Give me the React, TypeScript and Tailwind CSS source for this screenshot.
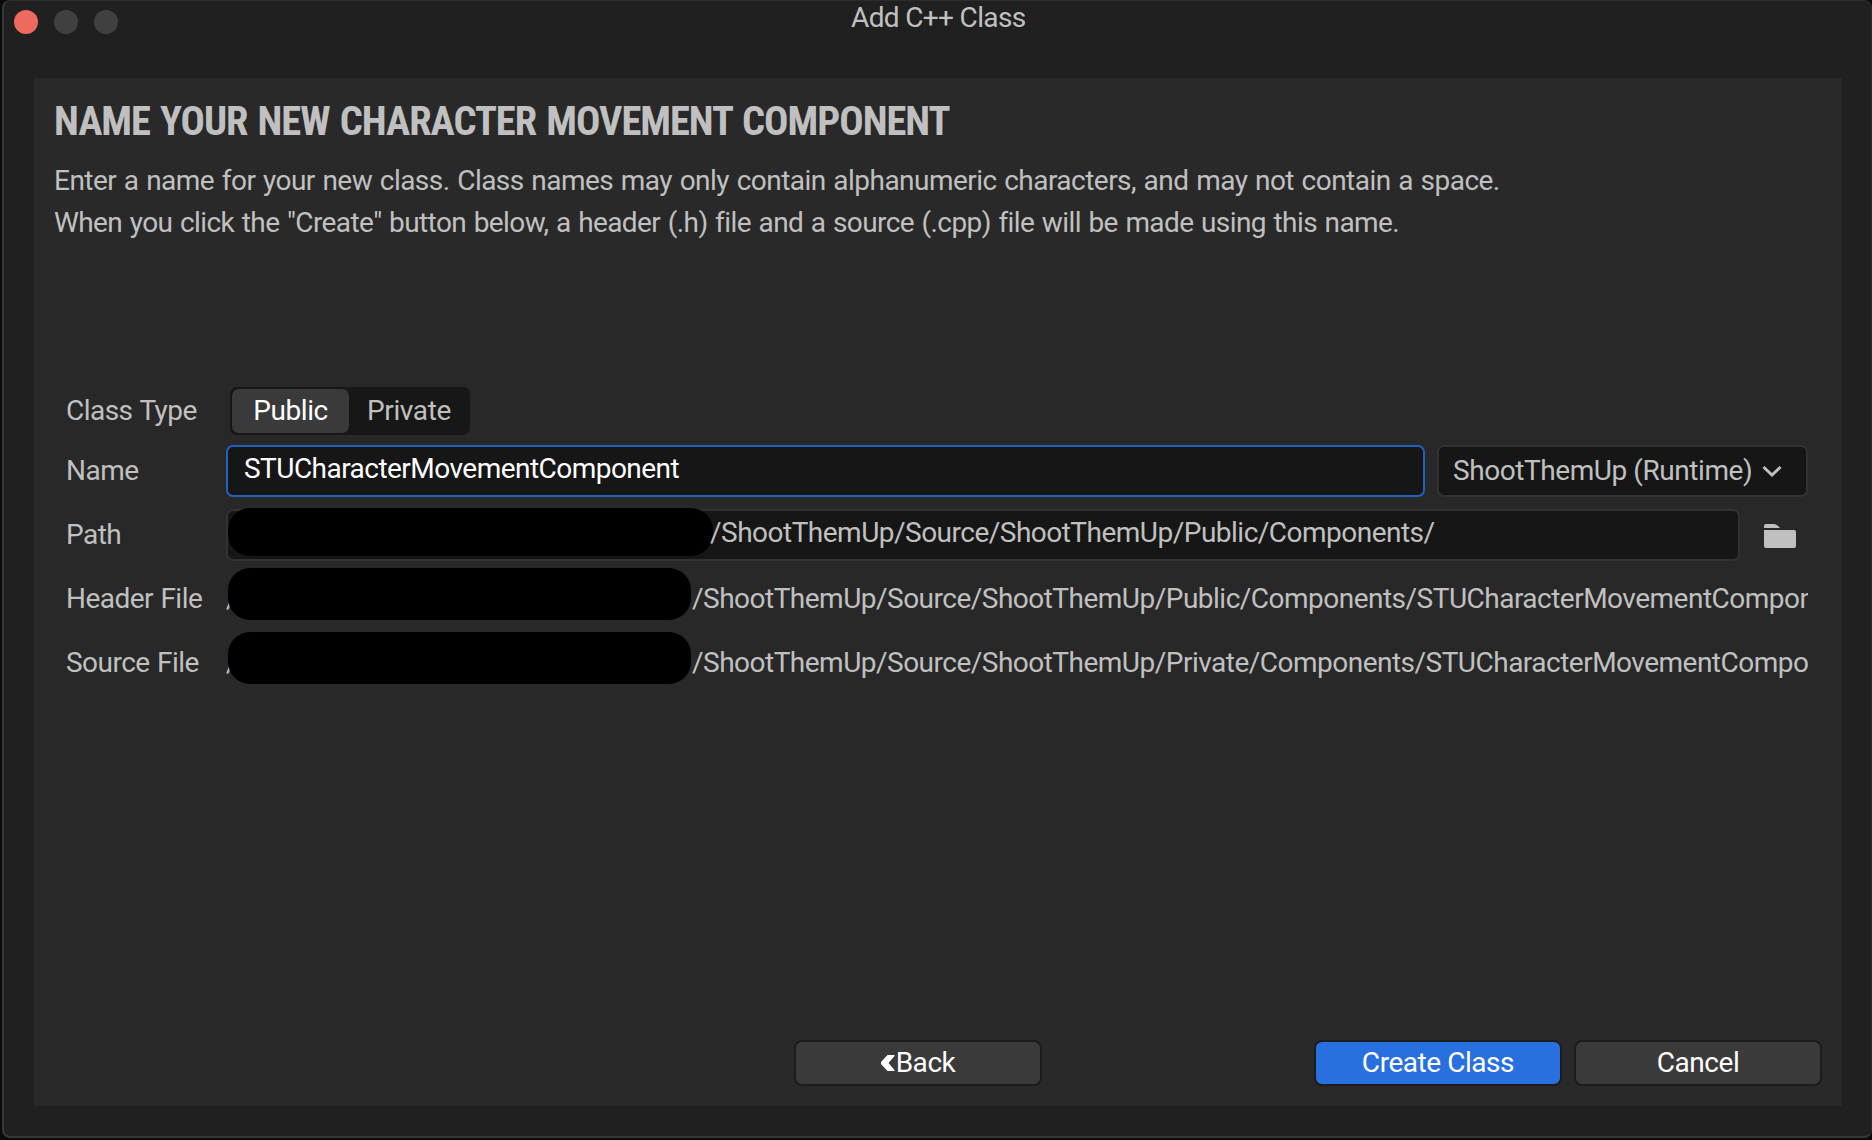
import type { ReactNode } from 'react';

const NAME = 'STUCharacterMovementComponent';

function Row({ label, children, className = 'h-16' }: { label: string; children: ReactNode; className?: string }) {
  return (
    <div className={`flex items-center ${className}`}>
      <div className="w-[160px] shrink-0 whitespace-nowrap [word-spacing:1px]">{label}</div>
      {children}
    </div>
  );
}

/* A file path whose leading part is hidden behind a black pill. */
function FilePath({ text }: { text: string }) {
  return (
    <div className="relative w-[1582px]">
      <div className="flex overflow-hidden whitespace-nowrap">
        <span className="w-[466px] shrink-0">/</span>
        <span className="tracking-[-0.51px]">{text}</span>
      </div>
      <div className="absolute top-[-10px] left-[2px] h-[52px] w-[463px] rounded-[22px] bg-black" />
    </div>
  );
}

function Button({ children, className }: { children: ReactNode; className: string }) {
  return (
    <button
      className={`flex h-[46px] w-[248px] items-center justify-center rounded-[8px] border-2 border-[#1c1c1c] tracking-[-0.45px] text-white ${className}`}
    >
      {children}
    </button>
  );
}

export default function App() {
  return (
    <div className="h-[1140px] w-[1872px] overflow-hidden bg-[#0b0b0b] pl-[2px] font-['Roboto',sans-serif] text-[28px] leading-[42px] tracking-[-0.53px] text-[#c0c0c0]">
      <div className="flex h-[1138px] w-[1870px] flex-col rounded-[8px] border-t border-r border-b-2 border-l-2 border-[#363636] border-t-[#2c2c2c] border-r-[#2a2a2a] bg-[#202020]">
        <header className="flex h-[77px] items-start">
          <div className="flex w-[600px] gap-4 pt-[9px] pl-[10px]">
            <span className="size-6 rounded-full bg-[#ee6a5f]" />
            <span className="size-6 rounded-full bg-[#404040]" />
            <span className="size-6 rounded-full bg-[#404040]" />
          </div>
          <h1 className="mt-[-4px] ml-[247px] tracking-[-0.64px] whitespace-nowrap">Add C++ Class</h1>
        </header>

        <main className="ml-[30px] flex h-[1028px] w-[1808px] flex-col bg-[#292929] px-5">
          <h2 className="mt-[22px] h-[42px] text-[40.5px] font-bold tracking-[-1px] whitespace-nowrap [font-stretch:75%] [word-spacing:1.8px]">
            NAME YOUR NEW CHARACTER MOVEMENT COMPONENT
          </h2>
          <p className="mt-[18px] whitespace-nowrap [word-spacing:1.2px]">
            Enter a name for your new class. Class names may only contain alphanumeric characters, and may not contain a space.
            <br />
            <span className="tracking-[-0.59px]">
              When you click the "Create" button below, a header (.h) file and a source (.cpp) file will be made using this name.
            </span>
          </p>

          <section className="mt-[131px] h-[327px] rounded-[8px] bg-[#282828] px-3 pt-[8px]">
            <Row label="Class Type" className="h-14">
              <div className="ml-[4px] flex h-12 w-[240px] rounded-[7px] bg-[#171717] p-[2px] tracking-[-0.4px]">
                <div className="flex w-[117px] items-center justify-center rounded-[7px] bg-[#3a3a3a] text-white">Public</div>
                <div className="flex flex-1 items-center justify-center pl-px">Private</div>
              </div>
            </Row>
            <Row label="Name">
              <div className="flex h-[52px] w-[1199px] items-center rounded-[7px] border-2 border-[#2161bd] bg-[#161616] pb-[5px] pl-4 text-white">
                {NAME}
              </div>
              <div className="ml-3 flex h-[52px] w-[371px] items-center rounded-[7px] border-2 border-[#323232] bg-[#161616] pb-px pl-[14px] whitespace-nowrap">
                <span className="tracking-[-0.43px]">ShootThemUp (Runtime)</span>
                <svg className="mt-px ml-[10px]" width="20" height="14" viewBox="0 0 20 14" fill="none" stroke="#c0c0c0" strokeWidth="3">
                  <path d="M1.500 3 L10 11 L18.500 3" />
                </svg>
              </div>
            </Row>
            <Row label="Path">
              <div className="relative flex h-[52px] w-[1514px] items-center rounded-[7px] border-2 border-[#323232] bg-[#161616] pb-[4px] pl-[482px] whitespace-nowrap">
                <div className="absolute top-[-3px] left-0 h-12 w-[485px] rounded-[22px] bg-black" />
                <span className="relative tracking-[-0.51px]">/ShootThemUp/Source/ShootThemUp/Public/Components/</span>
              </div>
              <svg className="mt-[2px] ml-6" width="32" height="24" viewBox="0 0 32 24" fill="#c0c0c0">
                <path d="M0 4V2Q0 0 2 0H10Q12 0 13.500 1.500L16 4Z" />
                <path d="M0 6H30Q32 6 32 8V22Q32 24 30 24H2Q0 24 0 22Z" />
              </svg>
            </Row>
            <Row label="Header File">
              <FilePath text={`/ShootThemUp/Source/ShootThemUp/Public/Components/${NAME}.h`} />
            </Row>
            <Row label="Source File">
              <FilePath text={`/ShootThemUp/Source/ShootThemUp/Private/Components/${NAME}.cpp`} />
            </Row>
          </section>

          <footer className="mt-auto mb-5 flex pl-[740px]">
            <Button className="bg-[#3a3a3a]">
              <svg className="mr-px" width="14" height="16" viewBox="0 0 14 16" fill="#fff">
                <path d="M6.500 0H13.500V1L7.500 8L13.500 15V16H6.500L0 9V7Z" />
              </svg>
              Back
            </Button>
            <Button className="ml-[272px] bg-[#2870e0]">Create Class</Button>
            <Button className="ml-3 bg-[#3a3a3a]">Cancel</Button>
          </footer>
        </main>
      </div>
    </div>
  );
}
